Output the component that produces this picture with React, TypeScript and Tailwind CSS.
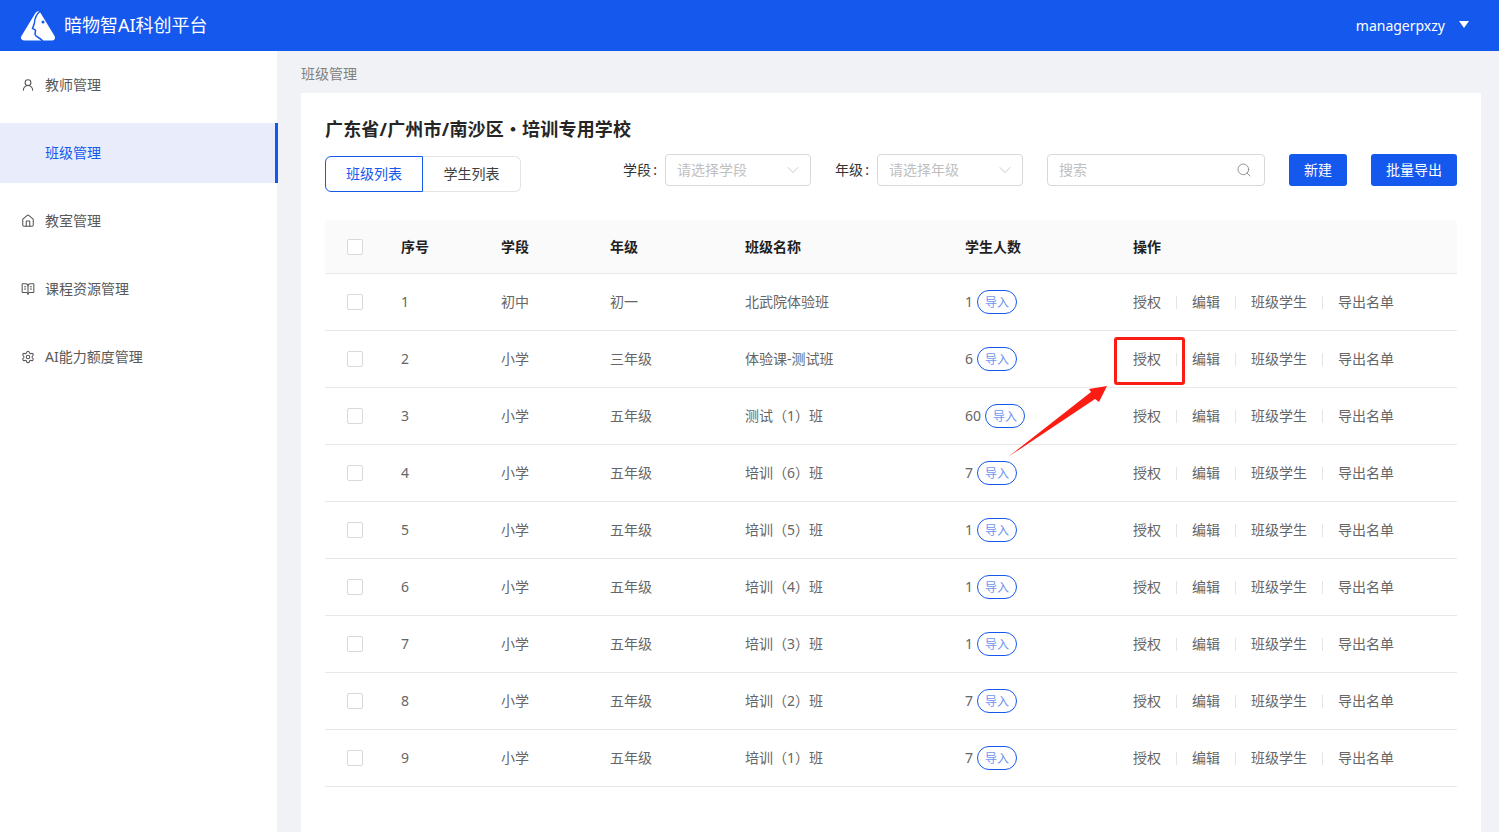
import { BookOpenText, ChevronDown, House, Search, Settings, UserRound } from 'lucide-react';

const menuItems = [
  { label: '教师管理', icon: <UserRound className="h-[14px] w-[14px]" strokeWidth={1.8} /> },
  { label: '班级管理', active: true },
  { label: '教室管理', icon: <House className="h-[14px] w-[14px]" strokeWidth={1.8} /> },
  { label: '课程资源管理', icon: <BookOpenText className="h-[14px] w-[14px]" strokeWidth={1.8} /> },
  { label: 'AI能力额度管理', icon: <Settings className="h-[14px] w-[14px]" strokeWidth={1.8} /> },
];

const rows = [
  { no: 1, stage: '初中', grade: '初一', name: '北武院体验班', count: 1 },
  { no: 2, stage: '小学', grade: '三年级', name: '体验课-测试班', count: 6 },
  { no: 3, stage: '小学', grade: '五年级', name: '测试（1）班', count: 60 },
  { no: 4, stage: '小学', grade: '五年级', name: '培训（6）班', count: 7 },
  { no: 5, stage: '小学', grade: '五年级', name: '培训（5）班', count: 1 },
  { no: 6, stage: '小学', grade: '五年级', name: '培训（4）班', count: 1 },
  { no: 7, stage: '小学', grade: '五年级', name: '培训（3）班', count: 1 },
  { no: 8, stage: '小学', grade: '五年级', name: '培训（2）班', count: 7 },
  { no: 9, stage: '小学', grade: '五年级', name: '培训（1）班', count: 7 },
];

const gridCols = 'grid grid-cols-[76px_100px_109px_135px_220px_168px_1fr] items-center';

function Logo() {
  return (
    <svg width="36" height="32" viewBox="0 0 36 32" className="shrink-0">
      <path d="M18 4.500L4 27.500H32z" fill="#fff" stroke="#fff" strokeWidth="6" strokeLinejoin="round" />
      <path
        d="M21 .5C16.500 4 14.500 9 14.300 13.500L12.500 18.500L15.500 20.200L15 24.500C15.500 27.500 21 27 23 32"
        fill="none"
        stroke="#1458ed"
        strokeWidth="1.500"
      />
      <circle cx="23" cy="12" r="1.500" fill="#1458ed" />
    </svg>
  );
}

function Checkbox() {
  return <span className="ml-[22px] block h-4 w-4 rounded-[2px] border border-[#d9d9d9] bg-white" />;
}

function FilterLabel({ text }: { text: string }) {
  return (
    <span className="mr-2 flex w-[34px] justify-between text-[#333]">
      {text}
      <span>:</span>
    </span>
  );
}

function Select({ placeholder }: { placeholder: string }) {
  return (
    <div className="flex h-8 w-[146px] items-center justify-between rounded border border-[#d9d9d9] bg-white pl-[11px] pr-[7px] text-sm text-[#bfbfbf]">
      <span>{placeholder}</span>
      <ChevronDown className="h-5 w-5 text-[#bfbfbf]" strokeWidth={1} />
    </div>
  );
}

function Actions() {
  return (
    <div className="flex items-center text-sm text-[#666]">
      <span>授权</span>
      <span className="mx-[15px] h-[13px] w-px bg-[#e4e4e4]" />
      <span>编辑</span>
      <span className="mx-[15px] h-[13px] w-px bg-[#e4e4e4]" />
      <span>班级学生</span>
      <span className="mx-[15px] h-[13px] w-px bg-[#e4e4e4]" />
      <span>导出名单</span>
    </div>
  );
}

export default function App() {
  return (
    <div className='relative flex h-[832px] flex-col overflow-hidden bg-[#f0f2f5] font-["Noto_Sans","Noto_Sans_CJK_SC",sans-serif]'>
      <header className="flex h-[51px] shrink-0 items-center justify-between bg-[#1458ed] pl-5 pr-[30px] text-white">
        <div className="flex items-center gap-2">
          <Logo />
          <span className="mb-px text-lg">暗物智AI科创平台</span>
        </div>
        <div className="flex items-center gap-[14px]">
          <span className="text-sm">managerpxzy</span>
          <span className="mb-[3px] h-0 w-0 border-x-[5px] border-t-[7px] border-x-transparent border-t-white" />
        </div>
      </header>

      <div className="flex min-h-0 flex-1">
        <aside className="relative w-[277px] shrink-0 bg-white pt-1">
          {menuItems.map((item) => (
            <div
              key={item.label}
              className={
                item.active
                  ? 'mb-2 flex h-[60px] w-[278px] items-center border-r-[3px] border-[#1458ed] bg-[#e9edfb] pl-[45px] text-sm text-[#1458ed]'
                  : 'mb-2 flex h-[60px] items-center pl-[21px] text-sm text-[#595959]'
              }
            >
              {item.icon && <span className="mr-[10px] flex w-[14px] text-[#555]">{item.icon}</span>}
              {item.label}
            </div>
          ))}
        </aside>

        <main className="flex min-w-0 flex-1 flex-col pl-6 pr-[18px]">
          <div className="flex h-[42px] shrink-0 items-center pt-[4px] text-sm text-[#808080]">班级管理</div>
          <section className="flex-1 bg-white px-6 pt-6">
            <h1 className="text-lg leading-6 font-bold tracking-[0.18px] text-[#262626]">广东省/广州市/南沙区・培训专用学校</h1>

            <div className="mt-[13px] flex items-start justify-between">
              <div className="mt-[2px] flex h-9 text-sm">
                <div className="flex w-[98px] items-center justify-center rounded-l-md border border-[#1458ed] text-[#1458ed]">
                  班级列表
                </div>
                <div className="flex w-[98px] items-center justify-center rounded-r-md border border-l-0 border-[#e4e4e4] text-[#404040]">
                  学生列表
                </div>
              </div>

              <div className="flex items-center text-sm">
                <FilterLabel text="学段" />
                <Select placeholder="请选择学段" />
                <span className="w-6" />
                <FilterLabel text="年级" />
                <Select placeholder="请选择年级" />
                <div className="ml-6 flex h-8 w-[218px] items-center justify-between rounded border border-[#d9d9d9] pl-[11px] pr-3 text-[#bfbfbf]">
                  <span>搜索</span>
                  <Search className="h-4 w-4 text-[#8c8c8c]" strokeWidth={1.4} />
                </div>
                <button className="ml-6 h-8 w-[58px] rounded-[3px] bg-[#1458ed] text-white">新建</button>
                <button className="ml-6 h-8 w-[86px] rounded-[3px] bg-[#1458ed] text-white">批量导出</button>
              </div>
            </div>

            <div className="mt-7">
              <div className={`${gridCols} h-[54px] rounded-t border-b border-[#e8e8e8] bg-[#fafafa] text-sm font-bold text-[#1f1f1f]`}>
                <Checkbox />
                <span>序号</span>
                <span>学段</span>
                <span>年级</span>
                <span>班级名称</span>
                <span>学生人数</span>
                <span>操作</span>
              </div>
              {rows.map((row) => (
                <div key={row.no} className={`${gridCols} h-[57px] border-b border-[#e8e8e8] text-sm text-[#666]`}>
                  <Checkbox />
                  <span>{row.no}</span>
                  <span>{row.stage}</span>
                  <span>{row.grade}</span>
                  <span>{row.name}</span>
                  <div className="flex items-center gap-1">
                    <span>{row.count}</span>
                    <span className="flex h-6 w-10 items-center justify-center rounded-full border border-[#1458ed] pt-px text-xs text-[#6e94f0]">
                      导入
                    </span>
                  </div>
                  <Actions />
                </div>
              ))}
            </div>
          </section>
        </main>
      </div>

      <div className="pointer-events-none absolute left-[1114px] top-[337px] h-[48px] w-[71px] rounded-[3px] border-[3px] border-[#fb1c14]" />
      <svg className="pointer-events-none absolute left-[1005px] top-[382px]" width="106" height="78" viewBox="0 0 106 78">
        <path d="M3 75L90 17L94 20L102 4L84 7L86 10z" fill="#fb1c14" />
      </svg>
    </div>
  );
}
